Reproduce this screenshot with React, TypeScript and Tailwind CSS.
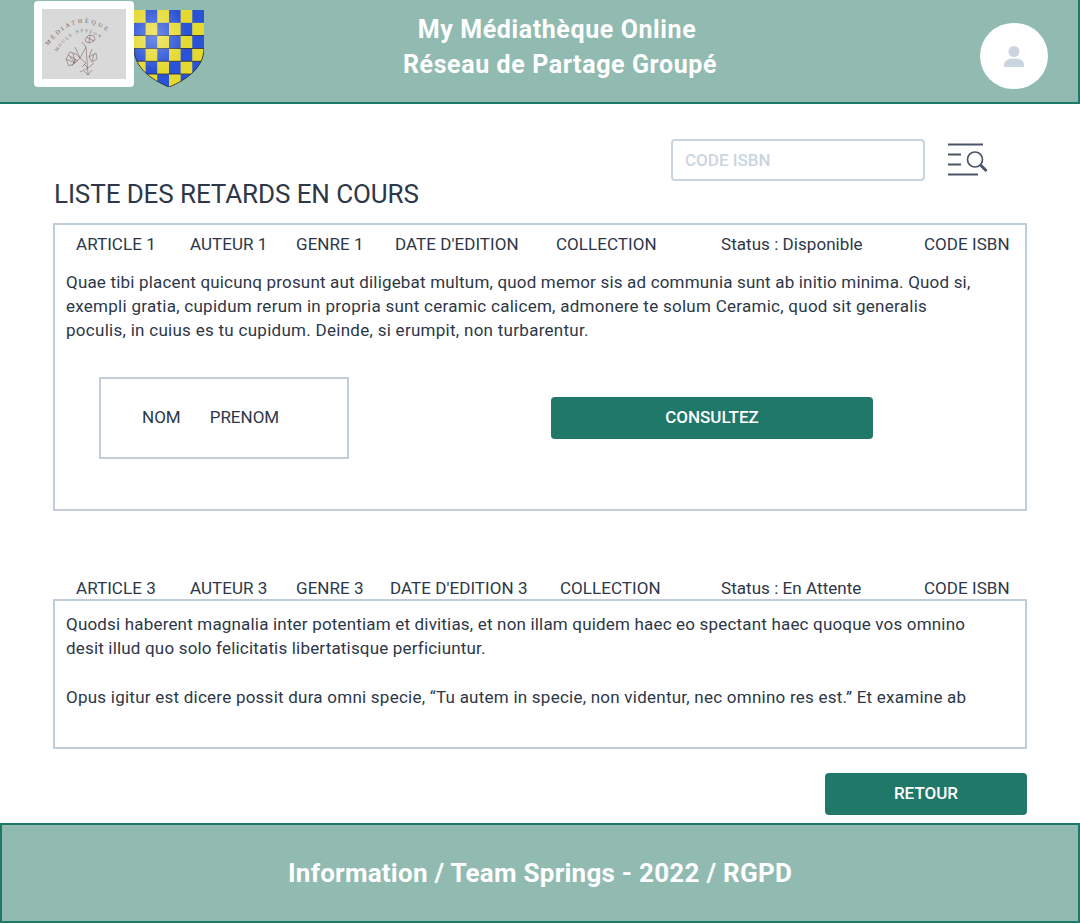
const cols1 = [
  { label: 'ARTICLE 1', width: 'w-[114px]' },
  { label: 'AUTEUR 1', width: 'w-[106px]' },
  { label: 'GENRE 1', width: 'w-[99px]' },
  { label: "DATE D'EDITION", width: 'w-[161px]' },
  { label: 'COLLECTION', width: 'w-[165px]' },
  { label: 'Status : Disponible', width: 'w-[203px]' },
  { label: 'CODE ISBN', width: 'w-[90px]' },
];

const cols2 = [
  { label: 'ARTICLE 3', width: 'w-[114px]' },
  { label: 'AUTEUR 3', width: 'w-[106px]' },
  { label: 'GENRE 3', width: 'w-[94px]' },
  { label: "DATE D'EDITION 3", width: 'w-[170px]' },
  { label: 'COLLECTION', width: 'w-[161px]' },
  { label: 'Status : En Attente', width: 'w-[203px]' },
  { label: 'CODE ISBN', width: 'w-[90px]' },
];

function MetaRow({ cols }: { cols: { label: string; width: string }[] }) {
  return (
    <div className="flex h-6 items-center whitespace-nowrap pl-[21px] text-[17px] leading-6 tracking-[0.05px] text-[#2d3748]">
      {cols.map((col) => (
        <span key={col.label} className={`${col.width} flex-shrink-0`}>
          {col.label}
        </span>
      ))}
    </div>
  );
}

function LogoImage() {
  return (
    <svg viewBox="0 0 84 70" className="h-[70px] w-[84px] bg-[#d9d9d9]">
      <path id="arc1" d="M6 37 Q40 -8 77 34" fill="none" />
      <path id="arc2" d="M15 43 Q39 6 67 38" fill="none" />
      <text fontSize="6" fill="#6f5a5a" fontFamily="Liberation Serif, serif" letterSpacing="2.6">
        <textPath href="#arc1">MÉDIATHÈQUE</textPath>
      </text>
      <text fontSize="4.5" fill="#7a6a6a" fontFamily="Liberation Serif, serif" letterSpacing="1.6">
        <textPath href="#arc2">MOULY NÉSSON</textPath>
      </text>
      <g fill="none" stroke="#7a5a5a" strokeWidth="0.55">
        <path d="M34 45 L28 43 L24 50 L27 57 L33 54 L28 48 M33 54 L38 49 L34 45 M31 44 L33 54 L24 50 M26 46 L36 52 M30 57 L34 50" />
        <path d="M38 49 L44 38 L40 33 M44 38 L46 66 M38 63 L46 59 L42 55 M46 59 L52 54 M47 48 L54 44 L55 50 L50 53 L47 48 M52 45 L50 52 M38 49 L44 54 L40 58" />
        <path d="M43 30 L47 26 L52 27 L53 31 L48 34 L44 33 Z M48 26 L47 34 M44 28 L52 32" />
        <path d="M46 66 L42 62 M46 66 L50 61 M33 38 L38 49 M50 40 L47 48" />
      </g>
    </svg>
  );
}

function Shield() {
  const colW = 70 / 6;
  const rowH = 77 / 6;
  const cells = [];
  for (let r = 0; r < 6; r++) {
    for (let c = 0; c < 6; c++) {
      cells.push(
        <rect
          key={`${r}-${c}`}
          x={c * colW}
          y={r * rowH}
          width={colW + 0.2}
          height={rowH + 0.2}
          fill={(r + c) % 2 === 0 ? '#e5d930' : '#2a52d6'}
        />,
      );
    }
  }
  return (
    <svg viewBox="0 0 70 77" className="h-[77px] w-[70px] flex-shrink-0">
      <defs>
        <clipPath id="shield">
          <path d="M0 0 H70 V38 C70 58 52 70 35 77 C18 70 0 58 0 38 Z" />
        </clipPath>
        <radialGradient id="shine" cx="0.3" cy="0.34" r="0.45">
          <stop offset="0" stopColor="#ffffff" stopOpacity="0.35" />
          <stop offset="1" stopColor="#ffffff" stopOpacity="0" />
        </radialGradient>
      </defs>
      <g clipPath="url(#shield)">
        {cells}
        <path d="M0 25.5 H70 M0 38.5 H70 M0 51.3 H70 M0 64 H70" stroke="#1a1a2a" strokeWidth="0.7" />
        <rect width="70" height="77" fill="url(#shine)" />
      </g>
      <path d="M0 38 C0 58 18 70 35 77 C52 70 70 58 70 38" fill="none" stroke="#222" strokeWidth="0.8" />
    </svg>
  );
}

function SearchListIcon() {
  return (
    <svg viewBox="0 0 40 34" className="h-[34px] w-[40px]" fill="none" stroke="#4a5568">
      <path d="M0 1.5 H35 M0 11.5 H13 M0 21.5 H13 M0 31.5 H30" strokeWidth="2" />
      <circle cx="27" cy="16.5" r="7.5" strokeWidth="1.7" />
      <path d="M32.5 22 L38.5 28" strokeWidth="3" />
    </svg>
  );
}

export default function App() {
  return (
    <div className="flex h-[924px] w-[1080px] flex-col overflow-hidden bg-white font-['Roboto',sans-serif] text-[#2d3748]">
      <header className="flex h-[104px] flex-shrink-0 items-start border-r-2 border-b-2 border-[#207868] bg-[#91bbb1]">
        <div className="ml-[34px] mt-px flex h-[86px] w-[100px] flex-shrink-0 items-center justify-center rounded bg-white">
          <LogoImage />
        </div>
        <div className="mt-[10px]">
          <Shield />
        </div>
        <div className="ml-[146px] mt-[12px] flex w-[420px] flex-shrink-0 flex-col items-center text-[25px] font-bold leading-[35px] tracking-[0.6px] text-white">
          <span className="-ml-[6px]">My Médiathèque Online</span>
          <span>Réseau de Partage Groupé</span>
        </div>
        <div className="ml-[210px] mt-[23px] flex h-[66px] w-[68px] flex-shrink-0 items-center justify-center rounded-full bg-white">
          <svg viewBox="0 0 24 24" className="h-6 w-6" fill="#cbd5e0">
            <circle cx="12" cy="7.5" r="5.5" />
            <path d="M2 21 C2 16 7 14.5 12 14.5 C17 14.5 22 16 22 21 V23 H2 Z" />
          </svg>
        </div>
      </header>

      <main className="flex flex-1 flex-col px-[53px]">
        <div className="mt-[35px] flex h-[42px] items-center">
          <input
            placeholder="CODE ISBN"
            className="ml-[618px] h-[42px] w-[254px] rounded border-2 border-[#cbd5e0] px-3 text-[17px] font-medium outline-none placeholder:text-[#cbd5e0]"
          />
          <div className="ml-[23px]">
            <SearchListIcon />
          </div>
        </div>
        <h1 className="ml-px h-[26px] text-[26px] font-normal leading-[26px] tracking-[-0.1px] text-[#2d3748]">
          LISTE DES RETARDS EN COURS
        </h1>

        <section className="mt-[16px] h-[288px] border-2 border-[#c1ceda] pt-[7px]">
          <MetaRow cols={cols1} />
          <p className="mt-[14px] whitespace-nowrap pl-[11px] text-[17px] leading-6 tracking-[0.18px]">
            Quae tibi placent quicunq prosunt aut diligebat multum, quod memor sis ad communia sunt ab initio minima. Quod si,
            <br />
            <span className="tracking-[0.27px]">
              exempli gratia, cupidum rerum in propria sunt ceramic calicem, admonere te solum Ceramic, quod sit generalis
            </span>
            <br />
            <span className="tracking-[0.28px]">poculis, in cuius es tu cupidum. Deinde, si erumpit, non turbarentur.</span>
          </p>
          <div className="mt-[35px] flex items-start pl-[44px]">
            <div className="flex h-[82px] w-[250px] items-center gap-[29px] border-2 border-[#c1ceda] pl-[41px] text-[17px]">
              <span>NOM</span>
              <span>PRENOM</span>
            </div>
            <button
              type="button"
              className="ml-[202px] mt-[20px] h-[42px] w-[322px] rounded bg-[#207868] text-[17px] font-medium text-white"
            >
              CONSULTEZ
            </button>
          </div>
        </section>

        <div className="mb-[-1px] ml-[2px] mt-[65px]">
          <MetaRow cols={cols2} />
        </div>
        <section className="h-[150px] whitespace-nowrap border-2 border-[#c1ceda] pl-[11px] pt-[11px] text-[17px] leading-6 tracking-[0.18px]">
          <p>
            Quodsi haberent magnalia inter potentiam et divitias, et non illam quidem haec eo spectant haec quoque vos omnino
            <br />
            desit illud quo solo felicitatis libertatisque perficiuntur.
          </p>
          <p className="mt-[25px] tracking-[0.24px]">
            Opus igitur est dicere possit dura omni specie, “Tu autem in specie, non videntur, nec omnino res est.” Et examine ab
          </p>
        </section>

        <div className="mt-[24px] flex justify-end">
          <button type="button" className="h-[42px] w-[202px] rounded bg-[#207868] text-[17px] font-medium text-white">
            RETOUR
          </button>
        </div>
      </main>

      <footer className="mb-px flex h-[100px] flex-shrink-0 items-center justify-center border-2 border-[#207868] bg-[#91bbb1] text-[26px] font-bold tracking-[0.25px] text-white">
        Information / Team Springs - 2022 / RGPD
      </footer>
    </div>
  );
}
